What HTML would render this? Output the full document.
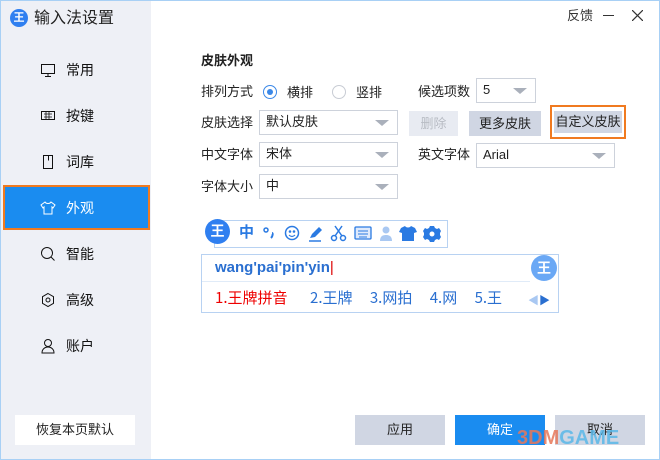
<html><head><style>
body{margin:0;width:660px;height:460px;overflow:hidden;font-family:"Liberation Sans","Noto Sans CJK SC",sans-serif;font-size:13px;color:#222;background:#fff;position:relative}
.a{position:absolute}
.side{left:0;top:0;width:150px;height:460px;background:#eef0f6;border-left:1px solid #a8d0f5}
.nav{left:40px;font-size:14px;color:#111;line-height:18px}
.dd{position:absolute;height:24px;border:1px solid #cdd2db;background:#fff;box-sizing:border-box;padding-left:6px;line-height:22px;font-size:13px}
.dd:after{content:"";position:absolute;right:8px;top:9px;border-left:7px solid transparent;border-right:7px solid transparent;border-top:6px solid #aab0bb}
.btn{position:absolute;text-align:center;box-sizing:border-box}
.lbl{position:absolute;font-size:13px;line-height:16px}
.ic{position:absolute}
</style></head><body>
<div class="a side"></div>
<div class="a" style="left:0;top:0;width:660px;height:1px;background:#a8d0f5"></div>
<div class="a" style="left:659px;top:0;width:1px;height:460px;background:#a8d0f5"></div>
<div class="a" style="left:0;top:459px;width:660px;height:1px;background:#a8d0f5"></div>
<div class="a" style="left:10px;top:9px;width:18px;height:18px;border-radius:50%;background:#2f7ff0;color:#fff;font-size:11px;font-weight:bold;text-align:center;line-height:18px">王</div>
<div class="a" style="left:34px;top:9px;font-size:16px;line-height:20px">输入法设置</div>
<svg class="a" style="left:40px;top:62px" width="16" height="16"><rect x="1.5" y="2.5" width="13" height="9" fill="none" stroke="#111"/><path d="M8 12v2M5 14.5h6" stroke="#111"/></svg>
<div class="a nav" style="left:66px;top:61px">常用</div>
<svg class="a" style="left:40px;top:108px" width="16" height="16"><rect x="1.5" y="3.5" width="13" height="8" fill="none" stroke="#111"/><path d="M4 6h8M4 9h8M6 4v7M9 4v7" stroke="#111" stroke-width=".8"/></svg>
<div class="a nav" style="left:66px;top:107px">按键</div>
<svg class="a" style="left:40px;top:154px" width="16" height="16"><path d="M3.5 1.5h9v13h-9zM8.5 1.5v5" fill="none" stroke="#111"/></svg>
<div class="a nav" style="left:66px;top:153px">词库</div>
<div class="a" style="left:3px;top:185px;width:143px;height:41px;background:#1a8cf0;border:2px solid #f07a20"></div>
<svg class="a" style="left:40px;top:200px" width="16" height="16"><path d="M5 2l-4 3 2 3 1-1v7h8v-7l1 1 2-3-4-3c-1 2-5 2-6 0z" fill="none" stroke="#fff"/></svg>
<div class="a nav" style="left:66px;top:199px;color:#fff">外观</div>
<svg class="a" style="left:40px;top:246px" width="16" height="16"><circle cx="7" cy="7" r="5.5" fill="none" stroke="#111"/><path d="M11 11l3.5 3.5" stroke="#111"/></svg>
<div class="a nav" style="left:66px;top:245px">智能</div>
<svg class="a" style="left:40px;top:292px" width="16" height="16"><path d="M8 1.5l5.5 3.2v6.6L8 14.5 2.5 11.3V4.7z" fill="none" stroke="#111"/><circle cx="8" cy="8" r="2" fill="none" stroke="#111"/></svg>
<div class="a nav" style="left:66px;top:291px">高级</div>
<svg class="a" style="left:40px;top:338px" width="16" height="16"><circle cx="8" cy="5" r="3.5" fill="none" stroke="#111"/><path d="M2 15c0-4 3-6 6-6s6 2 6 6z" fill="none" stroke="#111"/></svg>
<div class="a nav" style="left:66px;top:337px">账户</div>
<div class="btn" style="left:15px;top:415px;width:120px;height:30px;background:#fff;line-height:30px;font-size:13px">恢复本页默认</div>
<div class="a" style="left:567px;top:8px;font-size:13px;color:#333;line-height:16px">反馈</div>
<div class="a" style="left:603px;top:15px;width:11px;height:1px;background:#333"></div>
<svg class="a" style="left:632px;top:10px" width="11" height="11"><path d="M0 0L11 11M11 0L0 11" stroke="#333" stroke-width="1.2"/></svg>
<div class="a" style="left:201px;top:53px;font-size:13px;font-weight:bold;line-height:16px">皮肤外观</div>
<div class="lbl" style="left:201px;top:84px">排列方式</div>
<div class="a" style="left:263px;top:85px;width:12px;height:12px;border:1px solid #3a88e8;border-radius:50%"></div>
<div class="a" style="left:267px;top:89px;width:6px;height:6px;background:#3a88e8;border-radius:50%"></div>
<div class="lbl" style="left:287px;top:85px">横排</div>
<div class="a" style="left:332px;top:85px;width:12px;height:12px;border:1px solid #c8ccd4;border-radius:50%"></div>
<div class="lbl" style="left:356px;top:85px">竖排</div>
<div class="lbl" style="left:418px;top:84px">候选项数</div>
<div class="dd" style="left:476px;top:78px;width:60px;height:25px">5</div>
<div class="lbl" style="left:201px;top:115px">皮肤选择</div>
<div class="dd" style="left:259px;top:110px;width:139px;height:25px">默认皮肤</div>
<div class="btn" style="left:409px;top:111px;width:49px;height:25px;background:#e8ebf2;color:#b8bcc4;line-height:25px">删除</div>
<div class="btn" style="left:469px;top:111px;width:72px;height:25px;background:#d0d6e3;line-height:25px">更多皮肤</div>
<div class="btn" style="left:550px;top:105px;width:76px;height:34px;border:2px solid #f07a20;padding:4px 2px"><div style="background:#d0d6e3;height:22px;line-height:22px">自定义皮肤</div></div>
<div class="lbl" style="left:201px;top:147px">中文字体</div>
<div class="dd" style="left:259px;top:142px;width:139px;height:25px">宋体</div>
<div class="lbl" style="left:418px;top:147px">英文字体</div>
<div class="dd" style="left:476px;top:143px;width:139px;height:25px">Arial</div>
<div class="lbl" style="left:201px;top:179px">字体大小</div>
<div class="dd" style="left:259px;top:174px;width:139px;height:25px">中</div>
<div class="a" style="left:214px;top:220px;width:232px;height:26px;border:1px solid #b8d2f2"></div>
<div class="a" style="left:205px;top:219px;width:25px;height:25px;border-radius:50%;background:#2f7ff0;color:#fff;font-weight:bold;text-align:center;line-height:25px;font-size:14px">王</div>
<div class="a" style="left:239px;top:225px;color:#2a7ae2;font-weight:bold;font-size:15px;line-height:16px">中</div>
<svg class="ic" style="left:262px;top:224px" width="300" height="20" viewBox="0 0 300 20">
<g fill="#2a7ae2" stroke="#2a7ae2">
<circle cx="4" cy="6" r="2" fill="none" stroke-width="1.5"/><path d="M10 9c1 0 1 3-1 5" fill="none" stroke-width="2"/>
<circle cx="30" cy="9" r="6.5" fill="none" stroke-width="1.5"/><circle cx="28" cy="7.5" r=".8"/><circle cx="32" cy="7.5" r=".8"/><path d="M27 11q3 3 6 0" fill="none" stroke-width="1.2"/>
<path d="M48 14l2-4 7-7 3 3-7 7z" stroke="none"/><path d="M47 17h12" stroke-width="1.5"/>
<circle cx="72" cy="14" r="2.5" fill="none" stroke-width="1.5"/><circle cx="81" cy="14" r="2.5" fill="none" stroke-width="1.5"/><path d="M73 12l7-10M80 12l-7-10" stroke-width="1.5"/>
<rect x="93" y="3" width="16" height="12" rx="1" fill="#dfeafc" stroke-width="1.3"/><path d="M96 7h10M96 10h10M97 13h8" stroke-width="1"/>
<circle cx="124" cy="6" r="3.5" fill="#a9c8f2" stroke="none"/><path d="M118 17c0-5 3-6 6-6s6 1 6 6z" fill="#a9c8f2" stroke="none"/>
<path d="M139 4l4-2c1 2 5 2 6 0l4 2 2 4-3 1v8h-12v-8l-3-1z" stroke="none"/>
<path d="M168 2h4l1 2 2 1 2-1 2 3-1 2v2l1 2-2 3-2-1-2 1-1 2h-4l-1-2-2-1-2 1-2-3 1-2v-2l-1-2 2-3 2 1 2-1z" stroke="none"/><circle cx="170" cy="10" r="2.5" fill="#fff" stroke="none"/>
</g></svg>
<div class="a" style="left:201px;top:254px;width:356px;height:57px;border:1px solid #b8d2f2"></div>
<div class="a" style="left:202px;top:281px;width:328px;height:1px;background:#e0ebf8"></div>
<div class="a" style="left:215px;top:259px;font-size:15px;font-weight:bold;color:#2a6fd0">wang'pai'pin'yin<span style="color:#d00;font-weight:normal">|</span></div>
<div class="a" style="left:531px;top:255px;width:26px;height:26px;border-radius:50%;background:#6aa8f5;color:#fff;font-weight:bold;text-align:center;line-height:26px;font-size:14px">王</div>
<div class="a" style="left:215px;top:288px;font-size:15px;color:#e00;font-family:'Noto Sans CJK SC',sans-serif;line-height:20px">1.王牌拼音</div>
<div class="a" style="left:310px;top:288px;font-size:15px;color:#2a6fd0;font-family:'Noto Sans CJK SC',sans-serif;word-spacing:14px;line-height:20px">2.王牌 3.网拍 4.网 5.王</div>
<div class="a" style="left:528px;top:292px;font-size:11px;color:#a9c8f2">◀</div>
<div class="a" style="left:539px;top:292px;font-size:11px;color:#2a6fd0">▶</div>
<div class="btn" style="left:355px;top:415px;width:90px;height:30px;background:#d0d6e3;line-height:30px">应用</div>
<div class="btn" style="left:455px;top:415px;width:90px;height:30px;background:#1a8cf0;color:#fff;line-height:30px">确定</div>
<div class="btn" style="left:555px;top:415px;width:90px;height:30px;background:#d0d6e3;line-height:30px">取消</div>
<div class="a" style="left:517px;top:426px;font-size:20px;font-weight:bold;color:#e8785a;opacity:.85;line-height:24px">3DM<span style="color:#5ab8e8">GAME</span></div>
</body></html>
